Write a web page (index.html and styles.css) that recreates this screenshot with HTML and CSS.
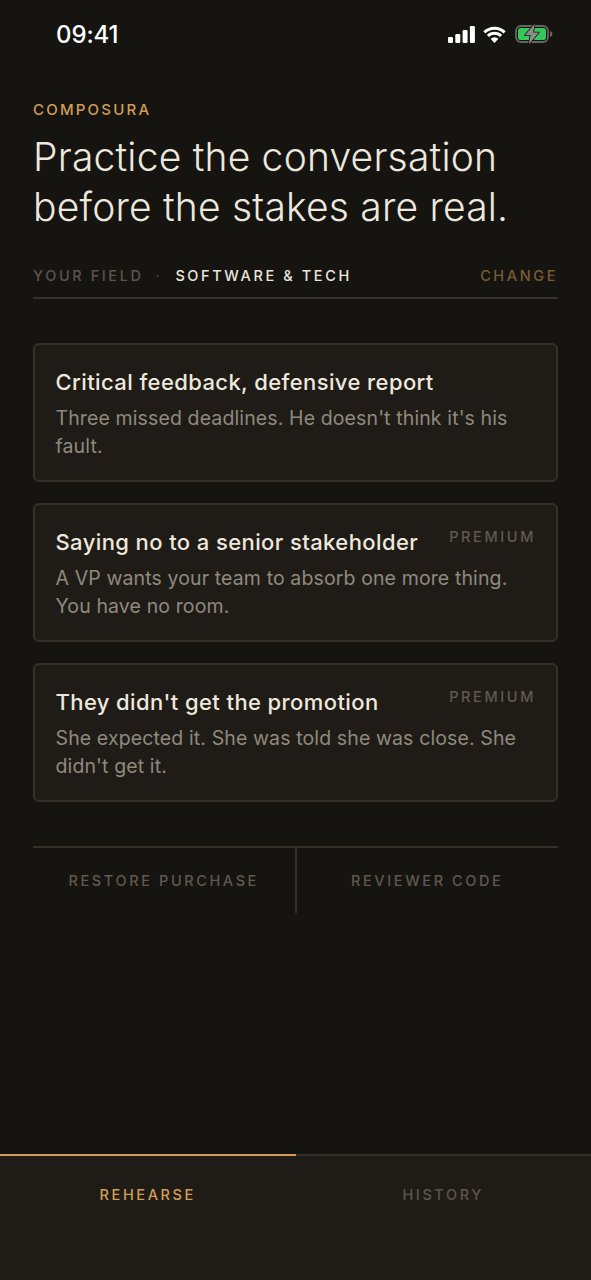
FILE: index.html
```html
<!DOCTYPE html>
<html lang="en">
<head>
<meta charset="utf-8">
<title>Composura</title>
<link rel="stylesheet" href="styles.css">
</head>
<body>
<div class="app">
  <div class="status">
    <span class="time">09:41</span>
    <div class="status-icons">
      <svg class="signal" width="27" height="17" viewBox="0 0 27 17"><rect x="0" y="11" width="5" height="6" rx="1.2"/><rect x="7.3" y="8" width="5" height="9" rx="1.2"/><rect x="14.6" y="4" width="5" height="13" rx="1.2"/><rect x="21.9" y="0" width="5" height="17" rx="1.2"/></svg>
      <svg class="wifi" width="23" height="17" viewBox="0 0 23 17"><path d="M1.4 6.4a14.3 14.3 0 0 1 20.2 0M4.9 10a9.3 9.3 0 0 1 13.2 0" fill="none" stroke="#fff" stroke-width="3"/><path d="M11.5 17l-3.9-4.2a5.6 5.6 0 0 1 7.8 0z" fill="#fff"/></svg>
      <svg class="battery" width="38" height="22" viewBox="0 0 38 22"><rect x="1" y="3" width="32" height="16" rx="5" fill="none" stroke="#666663" stroke-width="1.8"/><rect x="3" y="5" width="28" height="12" rx="2.5" fill="#34c759"/><path d="M35 8c1.6.4 2.4 1.6 2.4 3s-.8 2.6-2.4 3z" fill="#666663"/><path d="M19.8.8 10 12.2h5.6L13.8 21.2l10-11.6h-5.7z" fill="#8c8c8a" stroke="#151411" stroke-width="1.6" stroke-linejoin="round" paint-order="stroke"/></svg>
    </div>
  </div>
  <main class="content">
    <p class="eyebrow">COMPOSURA</p>
    <h1 class="title">Practice the conversation before the stakes are real.</h1>
    <div class="field">
      <span class="field-label">YOUR FIELD</span>
      <span class="field-dot">·</span>
      <span class="field-value">SOFTWARE &amp; TECH</span>
      <span class="field-change">CHANGE</span>
    </div>
    <section class="cards">
      <article class="card">
        <div class="card-head"><h2 class="card-title">Critical feedback, defensive report</h2></div>
        <p class="card-text">Three missed deadlines. He doesn't think it's his fault.</p>
      </article>
      <article class="card">
        <div class="card-head"><h2 class="card-title">Saying no to a senior stakeholder</h2><span class="badge">PREMIUM</span></div>
        <p class="card-text">A VP wants your team to absorb one more thing. You have no room.</p>
      </article>
      <article class="card">
        <div class="card-head"><h2 class="card-title">They didn't get the promotion</h2><span class="badge">PREMIUM</span></div>
        <p class="card-text">She expected it. She was told she was close. She didn't get it.</p>
      </article>
    </section>
    <div class="links">
      <span class="link link-left">RESTORE PURCHASE</span>
      <span class="link">REVIEWER CODE</span>
    </div>
  </main>
  <nav class="tabs">
    <div class="tab tab-active">REHEARSE</div>
    <div class="tab">HISTORY</div>
  </nav>
</div>
</body>
</html>
```
FILE: styles.css
```css
* { box-sizing: border-box; margin: 0; padding: 0; }
html, body { height: 100%; }
body { background: #151411; font-family: Inter, "Liberation Sans", sans-serif; overflow: hidden; }
.app { height: 1280px; display: flex; flex-direction: column; }

.status { height: 68px; flex: none; display: flex; justify-content: space-between; align-items: center; padding: 0 38px 0 56px; }
.time { color: #fff; font-size: 24px; font-weight: 500; line-height: 68px; letter-spacing: -0.1px; padding-top: 1px; }
.status-icons { display: flex; align-items: center; gap: 9px; }
.signal { fill: #fff; margin-right: -1px; }

.content { flex: 1; padding: 32px 33px 0; display: flex; flex-direction: column; }
.eyebrow { color: #d29c55; font-size: 15px; line-height: 20px; letter-spacing: 2.2px; font-weight: 500; }
.title { color: #ede8dd; font-size: 39px; line-height: 50px; font-weight: 350; margin-top: 12px; letter-spacing: 0.2px; }
.field { display: flex; align-items: center; margin-top: 22px; padding-bottom: 1px; border-bottom: 2px solid #35302a; height: 45px; font-size: 14.5px; letter-spacing: 2.6px; }
.field-label { color: #5b554c; font-weight: 500; }
.field-dot { color: #4a453d; margin: 0 13px 0 12px; }
.field-value { color: #ebe6dc; font-weight: 500; }
.field-change { color: #7a5c34; font-weight: 500; margin-left: auto; }

.cards { display: flex; flex-direction: column; gap: 21.5px; margin-top: 44px; }
.card { background: #1f1c17; border: 2px solid #35302a; border-radius: 6px; height: 138.5px; padding: 21px 20px 0 20.5px; }
.card-head { display: flex; justify-content: space-between; align-items: flex-start; }
.card-title { color: #ede8dd; font-size: 22px; line-height: 32px; font-weight: 500; letter-spacing: 0.4px; }
.badge { color: #5f594f; font-size: 14.5px; line-height: 20px; letter-spacing: 2.6px; font-weight: 500; padding-top: 1px; }
.card-text { color: #8f897e; font-size: 19.5px; line-height: 28px; margin-top: 6px; letter-spacing: 0.12px; }

.links { display: flex; margin-top: 44.5px; border-top: 2px solid #35302a; height: 67px; }
.link { flex: 1; display: flex; align-items: center; justify-content: center; color: #5f594f; font-size: 14.5px; letter-spacing: 2.6px; font-weight: 500; }
.link-left { border-right: 2px solid #35302a; }

.tabs { height: 126px; flex: none; display: flex; background: #1f1c17; border-top: 2px solid #35302a; }
.tab { flex: 1; text-align: center; color: #5b554c; font-size: 14.5px; line-height: 20px; letter-spacing: 2.6px; font-weight: 500; padding-top: 29px; margin-top: -2px; border-top: 2px solid transparent; }
.tab-active { color: #d29c55; border-top-color: #d29c55; }
```
